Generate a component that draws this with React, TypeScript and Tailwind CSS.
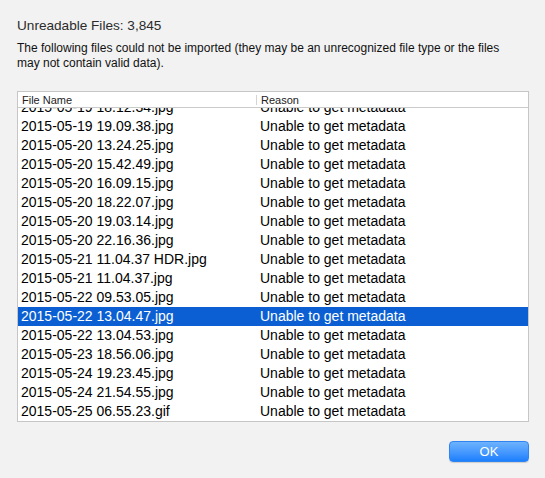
import React from "react";

const files = [
  "2015-05-19 18.12.34.jpg",
  "2015-05-19 19.09.38.jpg",
  "2015-05-20 13.24.25.jpg",
  "2015-05-20 15.42.49.jpg",
  "2015-05-20 16.09.15.jpg",
  "2015-05-20 18.22.07.jpg",
  "2015-05-20 19.03.14.jpg",
  "2015-05-20 22.16.36.jpg",
  "2015-05-21 11.04.37 HDR.jpg",
  "2015-05-21 11.04.37.jpg",
  "2015-05-22 09.53.05.jpg",
  "2015-05-22 13.04.47.jpg",
  "2015-05-22 13.04.53.jpg",
  "2015-05-23 18.56.06.jpg",
  "2015-05-24 19.23.45.jpg",
  "2015-05-24 21.54.55.jpg",
  "2015-05-25 06.55.23.gif",
];

const SELECTED = 11;

export default function App() {
  return (
    <div
      className="w-[545px] h-[478px] bg-[#f2f2f2] pl-[17px] pr-[16px] pt-[18px] text-black"
      style={{ fontFamily: '"Liberation Sans", Arial, sans-serif' }}
    >
      <div className="text-[13.6px] leading-[16px] text-[#2b2b2b]">Unreadable Files: 3,845</div>
      <p className="mt-[7px] text-[12px] leading-[15px] text-[#111] whitespace-nowrap">
        The following files could not be imported (they may be an unrecognized file type or the files
        <br />
        may not contain valid data).
      </p>

      <div className="mt-[20px] w-[512px] h-[331px] border border-[#c6c6c6] bg-white flex flex-col">
        <div className="h-[16px] shrink-0 flex items-center border-b border-[#cbcbcb] text-[11px] leading-[14px] text-[#222]">
          <div className="w-[238px] pl-[4px]">File Name</div>
          <div className="w-px h-[10px] bg-[#d4d4d4]" />
          <div className="pl-[4px]">Reason</div>
        </div>
        <div className="flex-1 overflow-hidden">
          <div className="-mt-[10px]">
            {files.map((f, i) => (
              <div
                key={f}
                className={
                  i === SELECTED
                    ? "flex h-[19px] text-[14px] leading-[19px] bg-[#0b5fd3] text-white"
                    : "flex h-[19px] text-[14px] leading-[19px] text-black"
                }
              >
                <div className="w-[239px] pl-[3px] whitespace-nowrap">{f}</div>
                <div className="pl-[3px] whitespace-nowrap">Unable to get metadata</div>
              </div>
            ))}
          </div>
        </div>
      </div>

      <div className="flex justify-end mt-[19px]">
        <button
          className="w-[80px] h-[21px] rounded-[4px] bg-gradient-to-b from-[#6db3fd] to-[#1a7ffe] border border-[#2f84f0] text-white text-[13px] leading-[19px] shadow-[0_0.5px_1px_rgba(0,0,0,0.15)]"
          style={{ fontFamily: '"Liberation Sans", Arial, sans-serif' }}
        >
          OK
        </button>
      </div>
    </div>
  );
}
